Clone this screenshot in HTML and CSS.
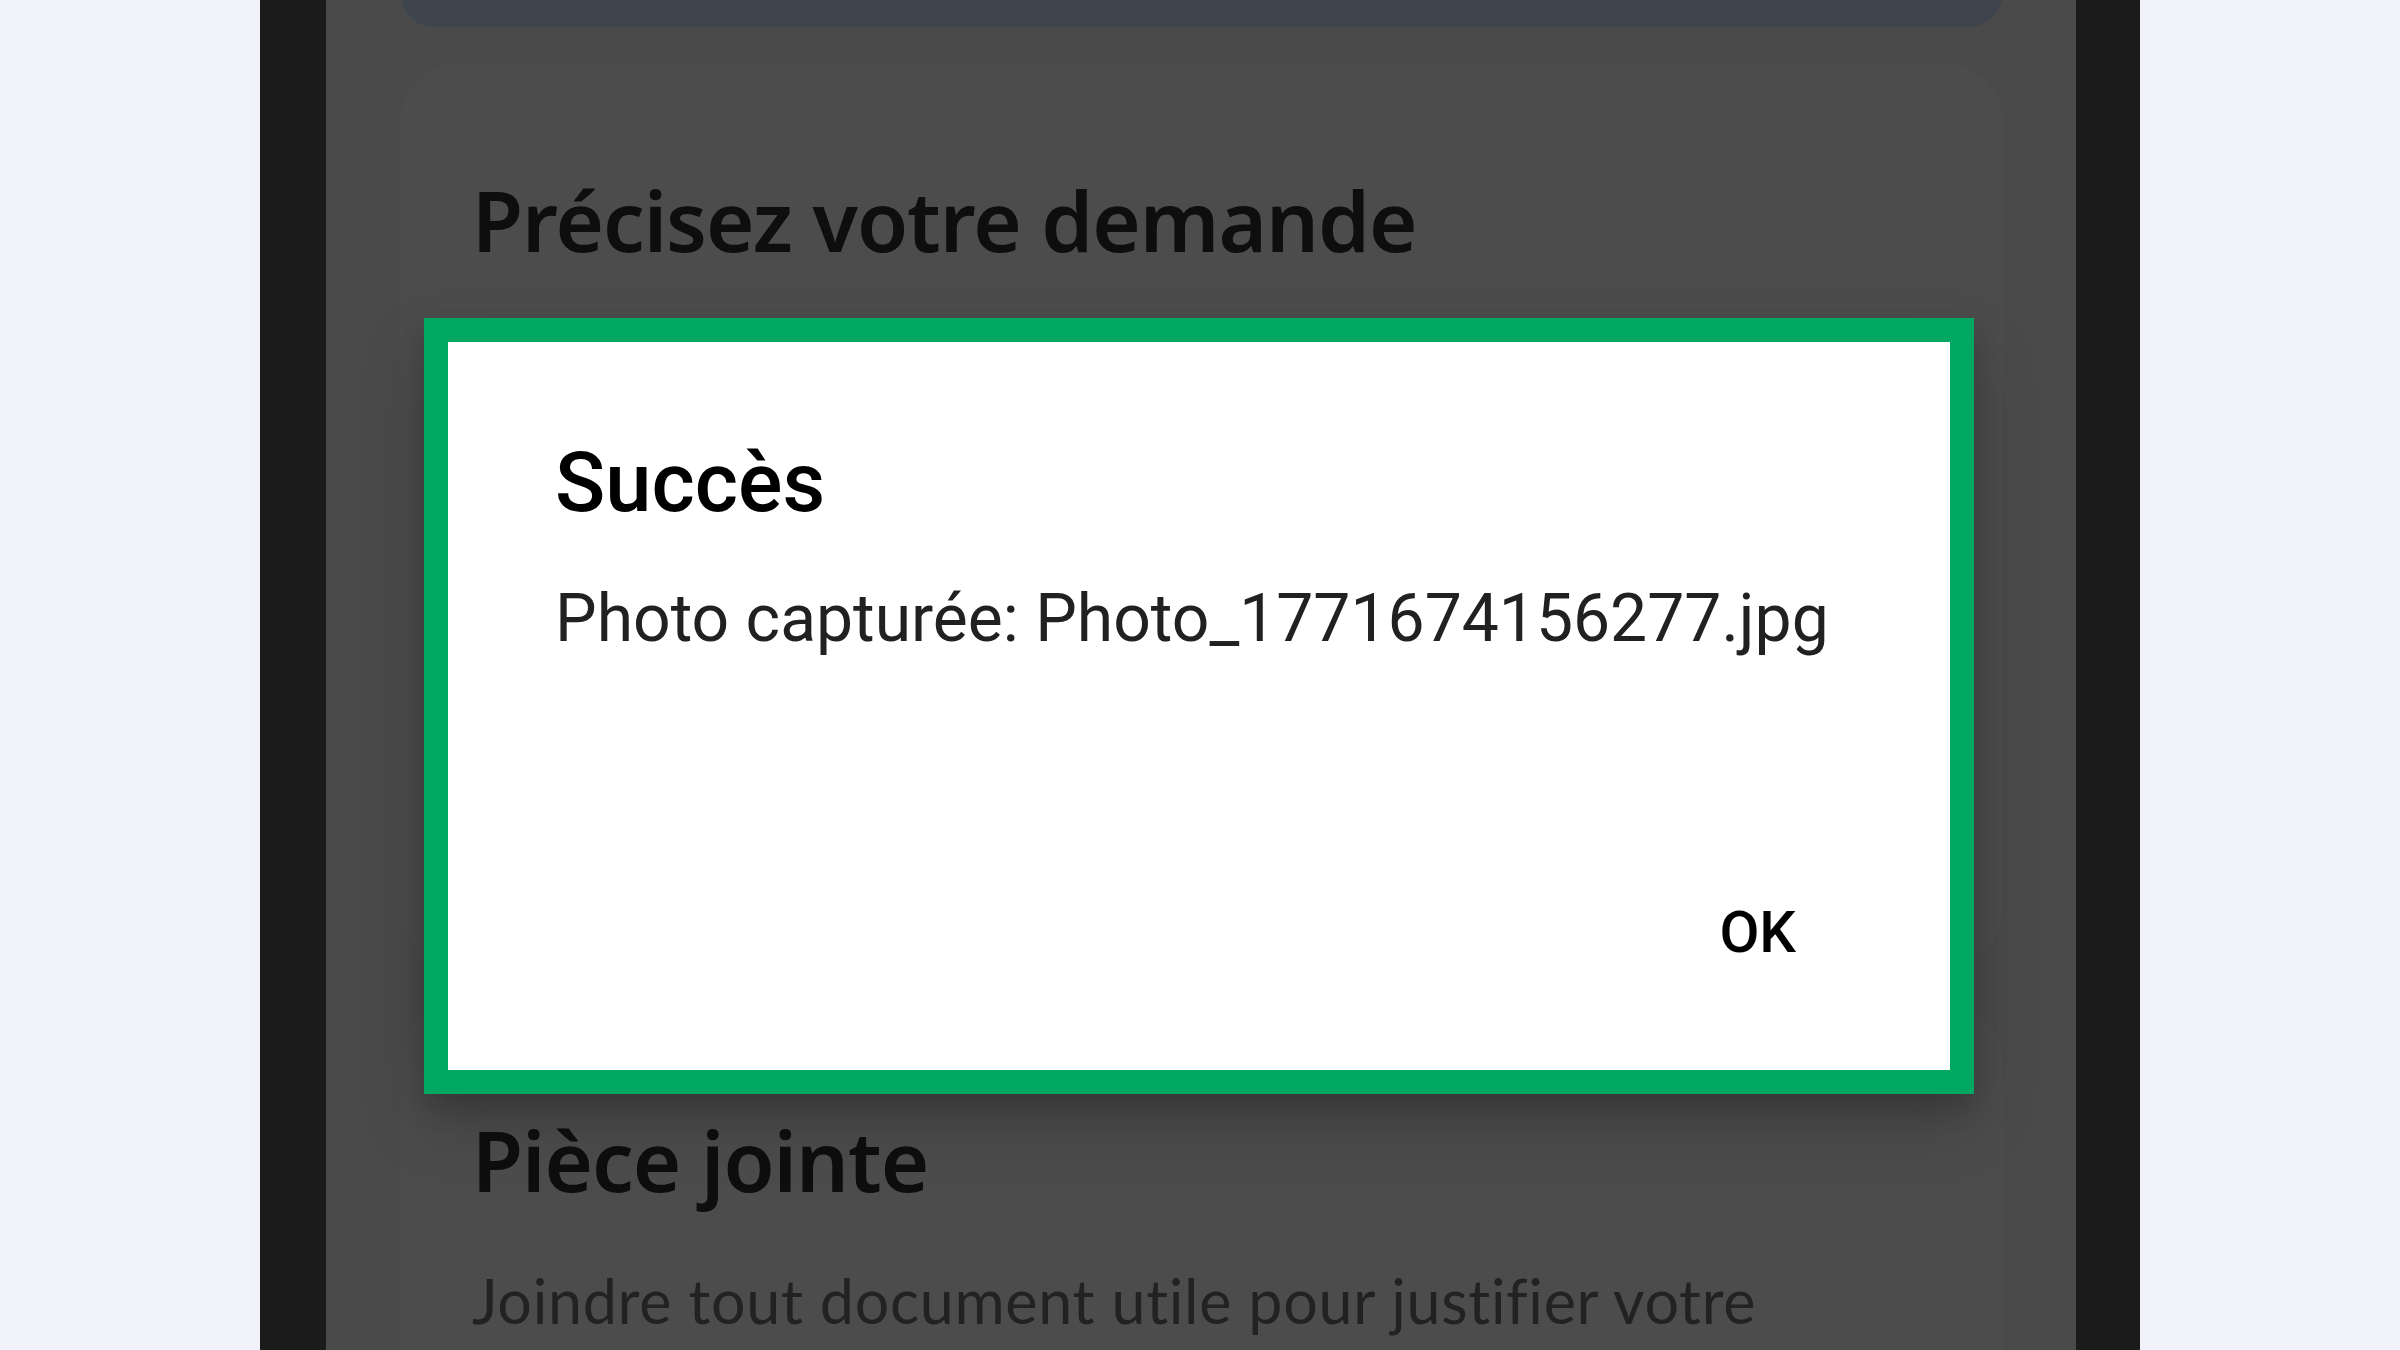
FILE: index.html
```html
<!DOCTYPE html>
<html lang="fr">
<head>
  <meta charset="utf-8">
  <title>Nouvelle demande</title>
  <link rel="stylesheet" href="styles.css">
</head>
<body>
  <div class="phone">
    <div class="screen">
      <div class="card card-info"></div>

      <div class="card card-request">
        <h2 class="card-title">Précisez votre demande</h2>
      </div>

      <div class="card card-attach">
        <h2 class="card-title">Pièce jointe</h2>
        <p class="card-text">Joindre tout document utile pour justifier votre demande.</p>
      </div>

      <!-- modal scrim + alert dialog -->
      <div class="scrim">
        <div class="dialog">
          <div class="dialog-body">
            <div class="dialog-title">Succès</div>
            <div class="dialog-message">Photo capturée: Photo_1771674156277.jpg</div>
            <div class="dialog-actions">
              <button class="dialog-btn">OK</button>
            </div>
          </div>
        </div>
      </div>
    </div>
  </div>
</body>
</html>
```

FILE: styles.css
```css
html, body {
  margin: 0;
  padding: 0;
  height: 100%;
}
body {
  background: #f2f3f8;
  display: flex;
  justify-content: center;
  overflow: hidden;
}
.phone {
  width: 1880px;
  height: 1350px;
  background: #1b1b1b;
  padding: 0 64px 0 66px;
  box-sizing: border-box;
}
.screen {
  position: relative;
  height: 100%;
  background: #f7f7f7;
  padding: 0 73px 0 74px;
  display: flex;
  flex-direction: column;
  gap: 36px;
  overflow: hidden;
  font-family: Lato, "Noto Sans", sans-serif;
}
.card {
  background: #fff;
  border-radius: 60px;
  flex-shrink: 0;
}
/* scrolled past: only the bottom edge shows */
.card-info {
  height: 140px;
  margin-top: -113px;
  border-radius: 34px;
  background: #d0e6fe;
}
.card-request {
  height: 904px;
  padding: 107px 72px 0;
  box-sizing: border-box;
}
.card-attach {
  padding: 107px 72px 80px;
}
.card-title {
  margin: 0;
  font-family: "Noto Sans", Lato, sans-serif;
  font-size: 83px;
  font-weight: 600;
  line-height: 100px;
  color: #2f2f2f;
  letter-spacing: -1px;
}
.card-text {
  margin: 54px 0 0;
  font-size: 61px;
  line-height: 74px;
  letter-spacing: 0.7px;
  color: #727272;
}
.scrim {
  position: absolute;
  inset: 0;
  background: rgba(0, 0, 0, 0.7);
  padding: 318px 0 0 98px;
}
.dialog {
  width: 1550px;
  border: 24px solid #00a862;
  box-sizing: border-box;
  background: #fff;
  box-shadow: 0 30px 60px rgba(0, 0, 0, 0.18), 0 14px 24px rgba(0, 0, 0, 0.14);
  font-family: Roboto, "Liberation Sans", sans-serif;
}
.dialog-body {
  height: 728px;
  box-sizing: border-box;
  padding: 92px 107px 104px 107px;
  display: flex;
  flex-direction: column;
}
.dialog-title {
  font-size: 83px;
  font-weight: 500;
  line-height: 97px;
  color: #000;
}
.dialog-message {
  margin-top: 47px;
  font-size: 66px;
  line-height: 81px;
  white-space: nowrap;
  color: #212121;
}
.dialog-actions {
  margin-top: auto;
  display: flex;
  justify-content: flex-end;
}
.dialog-btn {
  border: none;
  background: none;
  padding: 0;
  margin-right: 47px;
  font-family: inherit;
  font-size: 58px;
  font-weight: 500;
  line-height: 68px;
  color: #000;
}
```
